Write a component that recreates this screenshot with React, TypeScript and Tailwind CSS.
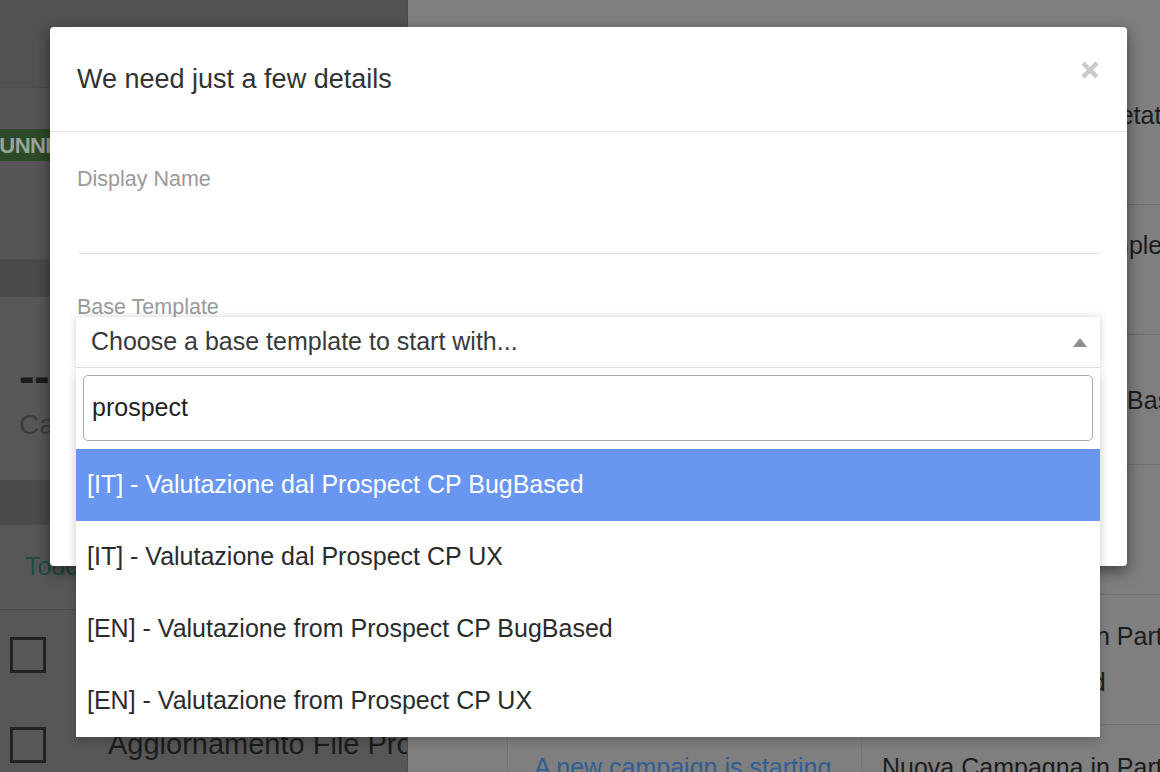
const FONT = "font-['Liberation_Sans',Arial,sans-serif]";

const OPTIONS = [
    "[IT] - Valutazione dal Prospect CP BugBased",
    "[IT] - Valutazione dal Prospect CP UX",
    "[EN] - Valutazione from Prospect CP BugBased",
    "[EN] - Valutazione from Prospect CP UX",
];

function LeftPanel() {
    return (
        <div className="w-[408px] shrink-0 flex flex-col bg-[#565656] border-r border-[#4a4a4a] overflow-hidden">
            {/* header */}
            <div className="h-[88px] shrink-0 bg-[#525252] border-b border-[#4c4c4c]" />

            {/* status */}
            <div className="h-[172px] shrink-0 pt-[41px] border-b border-[#4c4c4c]">
                <span className="-ml-[22px] inline-flex h-[32px] items-center px-[6px] bg-[#2d4b28] text-[#9ca39a] text-[22px] font-bold tracking-tight">
                    RUNNING
                </span>
            </div>

            <div className="h-[37px] shrink-0 bg-[#4b4b4b]" />

            {/* stat card */}
            <div className="h-[183px] shrink-0 bg-[#575757] pl-[19px] pt-[56px]">
                <div className="text-[46px] leading-[46px] font-bold text-[#1c1c1c]">--</div>
                <div className="mt-[10px] text-[28px] leading-[32px] text-[#3c3c3c]">Campagne attive</div>
            </div>

            <div className="h-[45px] shrink-0 bg-[#4b4b4b]" />

            {/* todo */}
            <div className="h-[85px] shrink-0 bg-[#575757] border-b border-[#4a4a4a] pl-[25px] flex items-center">
                <span className="text-[25px] text-[#1e4d46]">Todo</span>
            </div>
            {["Verifica Report Campagna", "Aggiornamento File Prospect"].map((t) => (
                <div key={t} className="h-[90px] shrink-0 bg-[#575757] pl-[10px] flex items-center gap-[62px] whitespace-nowrap">
                    <div className="w-[36px] h-[36px] border-[3px] border-[#222] shrink-0" />
                    <span className="text-[29px] text-[#1c1c1c]">{t}</span>
                </div>
            ))}
        </div>
    );
}

const RIGHT_ROWS = [
    { lines: ["Valutazione UX Completata"], pad: "pt-[17px] pl-[8px]" },
    { lines: ["Campagna Tests Completa"], pad: "pt-[17px] pl-[20px]" },
    { lines: ["Valutazione Tests BugBased"], pad: "pt-[42px] pl-[20px]" },
    { lines: [], pad: "pt-[0px] pl-[20px]" },
    { lines: ["Nuova Campagna in Partenza", "Template BugBased"], pad: "pt-[18px] pl-[20px]" },
];

function RightPanel() {
    return (
        <div className="flex-1 min-w-0 bg-[#7f7f7f] flex flex-col overflow-hidden">
            <div className="h-[75px] shrink-0" />
            {RIGHT_ROWS.map((r, i) => (
                <div key={i} className="h-[130px] shrink-0 border-b border-[#707070] flex">
                    <div className="w-[100px] shrink-0" />
                    <div className="w-[354px] shrink-0" />
                    <div className={`flex-1 whitespace-nowrap text-[25px] leading-[46px] text-[#1c1c1c] ${r.pad}`}>
                        {r.lines.map((l) => (
                            <div key={l}>{l}</div>
                        ))}
                    </div>
                </div>
            ))}
            <div className="flex-1 flex">
                <div className="w-[100px] shrink-0 border-r border-[#737373]" />
                <div className="w-[354px] shrink-0 border-r border-[#737373] pl-[26px] pt-[24px] whitespace-nowrap text-[25px] text-[#2f5e95]">
                    A new campaign is starting
                </div>
                <div className="flex-1 pl-[20px] pt-[24px] whitespace-nowrap text-[25px] text-[#1c1c1c]">
                    Nuova Campagna in Partenza
                </div>
            </div>
        </div>
    );
}

function CloseIcon() {
    return (
        <svg width="20" height="20" viewBox="0 0 20 20" className="mb-[18px] shrink-0">
            <path d="M3 3 L17 17 M17 3 L3 17" stroke="#c9c9c9" strokeWidth="4.5" strokeLinecap="butt" />
        </svg>
    );
}

function TemplateSelect() {
    return (
        <div className="relative -mt-[3px] -ml-px w-[1024px]">
            <div className="h-[51px] bg-white border-b border-[#e6e6e6] shadow-[0_0_8px_rgba(0,0,0,0.18)] flex items-center justify-between pl-[15px] pr-[13px]">
                <span className="text-[25px] text-[#3a3a3a]">Choose a base template to start with...</span>
                <svg width="14" height="9" viewBox="0 0 14 9">
                    <path d="M7 0 L14 9 L0 9 Z" fill="#8c8c8c" />
                </svg>
            </div>
            <div className="absolute left-0 top-full w-full bg-white shadow-[0_4px_10px_rgba(0,0,0,0.2)] z-10">
                <div className="pt-[7px] px-[7px] pb-[8px]">
                    <div className="h-[66px] border border-[#aaa] rounded-[5px] flex items-center px-[8px] text-[25px] text-[#222]">
                        prospect
                    </div>
                </div>
                {OPTIONS.map((o, i) => (
                    <div
                        key={o}
                        className={`h-[72px] flex items-center pl-[11px] text-[25px] whitespace-nowrap ${
                            i === 0 ? "bg-[#6896f0] text-white" : "text-[#2b2b2b]"
                        }`}
                    >
                        {o}
                    </div>
                ))}
            </div>
        </div>
    );
}

export default function App() {
    return (
        <div className={`relative w-[1160px] h-[772px] overflow-hidden flex ${FONT}`}>
            <LeftPanel />
            <RightPanel />

            {/* modal */}
            <div className="absolute left-[50px] top-[27px] w-[1077px] h-[539px] bg-white rounded-[4px] shadow-[0_5px_15px_rgba(0,0,0,0.5)] z-20">
                <div className="h-[105px] border-b border-[#e5e5e5] px-[27px] flex items-center justify-between">
                    <h4 className="text-[27px] leading-[30px] text-[#333]">We need just a few details</h4>
                    <CloseIcon />
                </div>
                <div className="px-[27px]">
                    <div className="pt-[35px] text-[21.5px] leading-[25px] text-[#9a9a9a]">Display Name</div>
                    <div className="h-[62px] border-b border-[#e2e2e2] rounded-b-[4px]" />
                    <div className="mt-[41px] text-[21.5px] leading-[25px] text-[#9a9a9a]">Base Template</div>
                    <TemplateSelect />
                </div>
            </div>
        </div>
    );
}
